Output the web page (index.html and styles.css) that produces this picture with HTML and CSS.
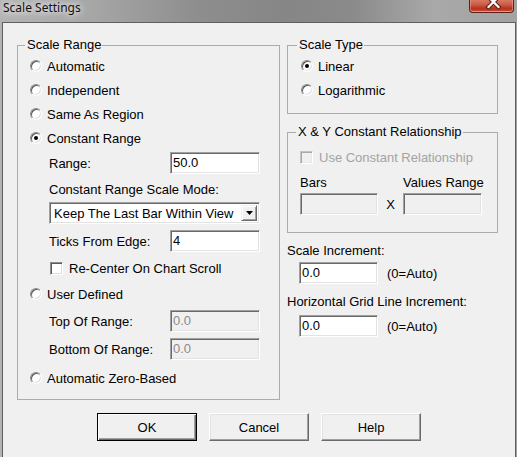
FILE: index.html
```html
<!DOCTYPE html>
<html lang="en">
<head>
  <meta charset="UTF-8" />
  <title>Scale Settings</title>
  <link rel="stylesheet" href="styles.css">
</head>
<body>
  <div class="window">
    <div class="titlebar">
      <span class="title">Scale Settings</span>
      <span class="close-btn">
        <svg width="45" height="13" viewBox="0 0 45 13">
          <path d="M19.5 -3 L29.5 7 M29.5 -3 L19.5 7" stroke="#5a1c12" stroke-width="4.2" stroke-linecap="square" />
          <path d="M19.5 -3 L29.5 7 M29.5 -3 L19.5 7" stroke="#ffffff" stroke-width="2.2" stroke-linecap="square" />
        </svg>
      </span>
    </div>

    <div class="client">
      <div class="columns">
        <!-- left: range options -->
        <div class="group range-group">
          <div class="group-title">Scale Range</div>
          <div class="opt first"><span class="radio"></span>Automatic</div>
          <div class="opt"><span class="radio"></span>Independent</div>
          <div class="opt"><span class="radio"></span>Same As Region</div>
          <div class="opt"><span class="radio checked"></span>Constant Range</div>

          <div class="field gap-2">
            <span class="field-label">Range:</span>
            <span class="edit">50.0</span>
          </div>
          <div class="sub-label">Constant Range Scale Mode:</div>
          <div class="combo">
            <span class="combo-text">Keep The Last Bar Within View</span>
            <span class="combo-btn">
              <svg width="7" height="4" viewBox="0 0 7 4"><polygon points="0,0 7,0 3.5,4" fill="#000" /></svg>
            </span>
          </div>
          <div class="field gap-6">
            <span class="field-label">Ticks From Edge:</span>
            <span class="edit">4</span>
          </div>
          <div class="check-row">
            <span class="check"></span>Re-Center On Chart Scroll
          </div>

          <div class="opt gap-4"><span class="radio"></span>User Defined</div>
          <div class="field gap-4">
            <span class="field-label">Top Of Range:</span>
            <span class="edit disabled">0.0</span>
          </div>
          <div class="field gap-6">
            <span class="field-label">Bottom Of Range:</span>
            <span class="edit disabled">0.0</span>
          </div>
          <div class="opt gap-6"><span class="radio"></span>Automatic Zero-Based</div>
        </div>

        <!-- right: type, relationship, increments -->
        <div class="right-col">
          <div class="group type-group">
            <div class="group-title">Scale Type</div>
            <div class="opt first"><span class="radio checked"></span>Linear</div>
            <div class="opt"><span class="radio"></span>Logarithmic</div>
          </div>

          <div class="group xy-group">
            <div class="group-title">X &amp; Y Constant Relationship</div>
            <div class="check-row muted">
              <span class="check disabled"></span>Use Constant Relationship
            </div>
            <div class="pair labels">
              <span>Bars</span>
              <span></span>
              <span>Values Range</span>
            </div>
            <div class="pair">
              <span class="edit disabled"></span>
              <span class="times">X</span>
              <span class="edit disabled"></span>
            </div>
          </div>

          <div class="inc-label">Scale Increment:</div>
          <div class="inc-row">
            <span class="edit">0.0</span>
            <span>(0=Auto)</span>
          </div>

          <div class="inc-label">Horizontal Grid Line Increment:</div>
          <div class="inc-row second">
            <span class="edit">0.0</span>
            <span>(0=Auto)</span>
          </div>
        </div>
      </div>

      <div class="buttons">
        <button class="btn default">OK</button>
        <button class="btn">Cancel</button>
        <button class="btn">Help</button>
      </div>
    </div>
  </div>
</body>
</html>
```

FILE: styles.css
```css
body {
  margin: 0;
  padding: 0;
  font-family: "Liberation Sans", Arial, sans-serif;
  font-size: 13px;
  color: #000;
  background: #9a9a9a;
}

.window {
  width: 517px;
  height: 457px;
  display: flex;
  flex-direction: column;
  overflow: hidden;
  background: linear-gradient(90deg, #b4b4b4 0%, #a6a6a6 18%, #8e8e8e 38%, #868686 55%, #8a8a8a 68%, #a9a9a9 84%, #a2a2a2 100%);
}

/* title bar */
.titlebar {
  height: 22px;
  display: flex;
  justify-content: space-between;
  align-items: flex-start;
  flex-shrink: 0;
}

.title {
  font-family: "Noto Sans", "Open Sans", sans-serif;
  font-size: 12px;
  line-height: 16px;
  padding-left: 3px;
  color: #111;
  text-shadow: 0 0 6px #fff, 0 0 10px rgba(255, 255, 255, 0.8);
}

.close-btn {
  width: 43px;
  height: 12px;
  margin-right: 3px;
  border: 1px solid #5b2018;
  border-top: none;
  border-radius: 0 0 4px 4px;
  background: linear-gradient(180deg, #d77a64 0%, #cc5a43 40%, #b8321d 70%, #c4503a 100%);
  box-shadow: inset 0 -1px 0 rgba(255, 200, 180, 0.6), inset 1px 0 0 rgba(255, 190, 170, 0.4), inset -1px 0 0 rgba(255, 190, 170, 0.4);
  display: block;
  overflow: hidden;
}

.close-btn svg {
  display: block;
  margin-left: -1px;
}

/* client area */
.client {
  flex: 1;
  margin: 0 1px 0 2px;
  border: 1px solid #5f5f5f;
  border-bottom: none;
  background: #f0f0f0;
  padding: 22px 0 0 14px;
}

.columns {
  display: flex;
  gap: 7px;
  align-items: flex-start;
}

.group {
  border: 1px solid #acacac;
  box-sizing: border-box;
}

.group-title {
  display: table;
  margin: -9px 0 0 -4px;
  padding: 0 1px 0 2px;
  line-height: 16px;
  background: #f0f0f0;
}

.range-group {
  width: 263px;
  padding: 0 0 9px 12px;
}

.range-group .group-title {
  margin-left: -5px;
}

.opt {
  height: 24px;
  display: flex;
  align-items: center;
}

.opt.first {
  margin-top: 1px;
}

.radio {
  width: 10px;
  height: 10px;
  margin-right: 5px;
  border-radius: 50%;
  border: 1px solid;
  border-color: #8d8d8d #ffffff #ffffff #8d8d8d;
  background: #fff;
  box-shadow: inset 1px 1px 0 #5a5a5a, inset -1px -1px 0 #dedede;
  position: relative;
  flex-shrink: 0;
}

.radio.checked::after {
  content: "";
  position: absolute;
  left: 3px;
  top: 3px;
  width: 4px;
  height: 4px;
  border-radius: 50%;
  background: #000;
}

.gap-2 { margin-top: 2px; }
.gap-4 { margin-top: 4px; }
.gap-6 { margin-top: 6px; }

.field {
  height: 22px;
  display: flex;
  align-items: center;
  margin-left: 19px;
}

.field-label {
  width: 121px;
}

.edit {
  width: 90px;
  height: 22px;
  box-sizing: border-box;
  border: 1px solid;
  border-color: #a0a0a0 #ffffff #ffffff #a0a0a0;
  box-shadow: inset 1px 1px 0 #6a6a6a, inset -1px -1px 0 #e3e3e3;
  background: #fff;
  padding: 0 2px;
  line-height: 20px;
}

.edit.disabled {
  background: #f0f0f0;
  color: #8b8b8b;
}

.sub-label {
  margin: 8px 0 0 19px;
  line-height: 16px;
}

.combo {
  width: 211px;
  height: 22px;
  margin: 4px 0 0 19px;
  box-sizing: border-box;
  border: 1px solid;
  border-color: #a0a0a0 #ffffff #ffffff #a0a0a0;
  box-shadow: inset 1px 1px 0 #6a6a6a, inset -1px -1px 0 #e3e3e3;
  background: #fff;
  display: flex;
  align-items: center;
  padding: 2px 2px 2px 4px;
}

.combo-text {
  flex: 1;
}

.combo-btn {
  width: 16px;
  height: 16px;
  box-sizing: border-box;
  border: 1px solid;
  border-color: #f0f0f0 #6a6a6a #6a6a6a #f0f0f0;
  box-shadow: inset 1px 1px 0 #fff, inset -1px -1px 0 #a0a0a0;
  background: #f0f0f0;
  display: flex;
  align-items: center;
  justify-content: center;
}

.check-row {
  height: 20px;
  margin: 6px 0 0 20px;
  display: flex;
  align-items: center;
}

.check {
  width: 11px;
  height: 11px;
  margin-right: 6px;
  border: 1px solid;
  border-color: #8d8d8d #ffffff #ffffff #8d8d8d;
  box-shadow: inset 1px 1px 0 #5a5a5a, inset -1px -1px 0 #dedede;
  background: #fff;
  flex-shrink: 0;
}

.check.disabled {
  background: #f0f0f0;
  border-color: #c4c4c4 #ffffff #ffffff #c4c4c4;
  box-shadow: inset 1px 1px 0 #a8a8a8, inset -1px -1px 0 #e8e8e8;
}

/* right column */
.right-col {
  width: 211px;
}

.type-group {
  padding: 0 0 11px 13px;
}

.xy-group {
  margin-top: 18px;
  padding: 0 0 17px 12px;
}

.xy-group .check-row {
  margin: 7px 0 0 0;
}

.muted {
  color: #a3a3a3;
}

.pair {
  display: grid;
  grid-template-columns: 78px 25px 79px;
  align-items: center;
  margin-top: 2px;
}

.pair.labels {
  margin-top: 8px;
  line-height: 16px;
  white-space: nowrap;
}

.pair .edit {
  width: auto;
}

.times {
  text-align: center;
}

.inc-label {
  margin-top: 10px;
  line-height: 16px;
}

.inc-row {
  display: flex;
  align-items: center;
  gap: 9px;
  margin: 3px 0 0 12px;
}

.inc-row.second {
  margin-top: 5px;
}

.inc-row .edit {
  width: 79px;
}

/* bottom buttons */
.buttons {
  display: flex;
  justify-content: center;
  gap: 12px;
  margin: 13px 0 0 -14px;
}

.btn {
  width: 100px;
  height: 28px;
  font-family: inherit;
  font-size: 13px;
  color: #000;
  background: #f0f0f0;
  border: 1px solid;
  border-color: #ffffff #6a6a6a #6a6a6a #ffffff;
  box-shadow: inset -1px -1px 0 #a0a0a0, inset 1px 1px 0 #e3e3e3;
  padding: 0;
}

.btn.default {
  border-color: #000;
  box-shadow: inset 1px 1px 0 #fff, inset -1px -1px 0 #6a6a6a, inset -2px -2px 0 #a0a0a0;
}
```
